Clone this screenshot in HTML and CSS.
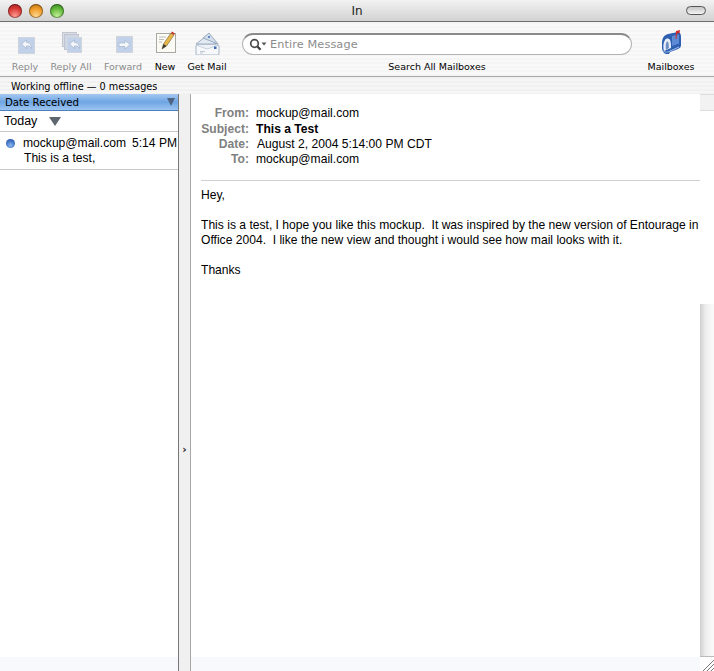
FILE: index.html
```html
<!DOCTYPE html>
<html lang="en">

<head>
  <meta charset="UTF-8">
  <meta name="viewport" content="width=device-width, initial-scale=1.0">
  <title>In</title>
  <link rel="stylesheet" href="styles.css">
</head>

<body>
  <div class="window">
    <div class="titlebar">
      <div class="lights">
        <span class="light red"></span>
        <span class="light amber"></span>
        <span class="light green"></span>
      </div>
      <div class="title">In</div>
      <div class="pill-wrap"><span class="pill"></span></div>
    </div>

    <div class="toolbar">
      <div class="tool tool-reply off">
        <svg width="20" height="20" viewBox="0 0 20 20">
          <rect x="3.500" y="3.500" width="16" height="16" fill="#b9cbe8" stroke="#c9ced6" />
          <path d="M6.500 10l5-4v2.500c3 0 5 2 5 6-1-2-3-3-5-2.500V14.500z" fill="#f4f7fb" stroke="#7f95b5" stroke-width=".5" />
        </svg>
        <span>Reply</span>
      </div>
      <div class="tool tool-all off">
        <svg width="24" height="24" viewBox="0 0 24 24">
          <rect x="3.500" y="2.500" width="14" height="14" fill="#d5dae4" stroke="#b8bcc6" />
          <rect x="5.500" y="4.500" width="14" height="15" fill="#c6d2e6" stroke="#b8bcc6" />
          <rect x="8.500" y="7.500" width="14" height="15" fill="#b9cbe8" stroke="#c9ced6" />
          <path d="M10.500 14l5-4v2.500c3 0 5 2 5 6-1-2-3-3-5-2.500v2.500z" fill="#f4f7fb" stroke="#7f95b5" stroke-width=".5" />
        </svg>
        <span>Reply All</span>
      </div>
      <div class="tool tool-forward off">
        <svg width="20" height="20" viewBox="0 0 20 20">
          <rect x="3.500" y="2.500" width="16" height="16" fill="#b9cbe8" stroke="#c9ced6" />
          <path d="M17 10.500l-5-4V9H6v3.500h6V15z" fill="#f4f7fb" stroke="#7f95b5" stroke-width=".5" />
        </svg>
        <span>Forward</span>
      </div>
      <div class="tool tool-new">
        <svg width="24" height="24" viewBox="0 0 24 24">
          <rect x="3.500" y="3.500" width="19" height="19" fill="#fbfaf4" stroke="#a9a9a4" />
          <path d="M6 7h7M6 9.500h5M6 12h3" stroke="#bdbdb8" />
          <path d="M9 19l1.500-5L18 3l3 2-7.500 11z" fill="#e8b84c" stroke="#6f5a2a" stroke-width=".6" />
          <path d="M18 3l1-1.500 3 2-1 1.500z" fill="#c23a2e" />
          <path d="M9 19l1.500-5 3 2z" fill="#3a3a3a" />
        </svg>
        <span>New</span>
      </div>
      <div class="tool tool-get">
        <svg width="26" height="24" viewBox="0 0 26 24">
          <path d="M2 13L13 4.500 22 13z" fill="#e3eaf3" stroke="#8a9cb2" stroke-width=".8" />
          <path d="M9 7l6-5 9 11z" fill="#d3deec" stroke="#8a9cb2" stroke-width=".8" />
          <circle cx="15" cy="6" r="1" fill="#3d6cb3" />
          <rect x="2" y="14" width="23" height="10" rx="1" fill="#f6f8fb" stroke="#8fa2ba" stroke-width=".8" />
          <path d="M2 14l11 4 12-4" fill="#eef2f7" stroke="#a9b8cc" stroke-width=".6" />
          <rect x="20" y="15.500" width="2.500" height="2.500" fill="#3d6cb3" />
          <path d="M6 20.500h5M6 22h3" stroke="#c3c8d0" />
        </svg>
        <span>Get Mail</span>
      </div>

      <div class="search">
        <div class="search-field">
          <svg class="search-icon" width="18" height="13" viewBox="0 0 18 13">
            <circle cx="5.500" cy="5.500" r="3.800" fill="none" stroke="#4a4a4a" stroke-width="1.700" />
            <path d="M8.500 8.500l3 3.300" stroke="#3a3a3a" stroke-width="2.200" />
            <path d="M12.500 4.500h5l-2.500 3z" fill="#555" />
          </svg>
          <span class="search-hint">Entire Message</span>
        </div>
        <span class="search-label">Search All Mailboxes</span>
      </div>

      <div class="tool tool-boxes">
        <svg width="24" height="24" viewBox="0 0 24 24">
          <path d="M3 13c0-5 2-8 6-9l10-2c2 0 3 2 3 5v8c0 2-1 3-3 4l-8 3-1 2c-4 1-7-2-7-6z" fill="#2f5fb0" />
          <path d="M5 21c-1-3-1-8 1-11 1-2 4-2 5 0 1 2 1 5 1 8z" fill="#e8eef8" />
          <path d="M7 20c-.500-3-.500-6 .500-8 .800-1 1.500-.500 2 .500l.500 5.500z" fill="#6f8fc4" />
          <path d="M13 6l7-1.500v9L13 16z" fill="#5d8bd6" />
          <path d="M3 20c2 2 5 3 8 1l9-4" stroke="#9dbdec" fill="none" />
          <path d="M16.500 9l.500-8 4-1-.500 3-2.500.700-.500 5.300z" fill="#cf2f2a" />
        </svg>
        <span>Mailboxes</span>
      </div>
    </div>

    <div class="status">Working offline — 0 messages</div>

    <div class="panes">
      <div class="list">
        <div class="list-head">
          <span>Date Received</span>
          <span class="head-arrow"></span>
        </div>
        <div class="group">
          <span>Today</span>
          <span class="group-arrow"></span>
        </div>
        <div class="msg">
          <div class="msg-top">
            <span class="dot"></span>
            <span class="msg-from">mockup@mail.com</span>
            <span class="msg-time">5:14 PM</span>
          </div>
          <div class="msg-subject">This is a test,</div>
        </div>
        <div class="list-fill"></div>
        <div class="strip"></div>
      </div>

      <div class="splitter"><span class="grip">›</span></div>

      <div class="reader">
        <div class="reader-main">
          <div class="mail">
            <div class="headers">
              <div class="hrow"><span class="hname">From:</span><span>mockup@mail.com</span></div>
              <div class="hrow"><span class="hname">Subject:</span><b>This a Test</b></div>
              <div class="hrow"><span class="hname">Date:</span><span class="hdate">August 2, 2004 5:14:00 PM CDT</span></div>
              <div class="hrow"><span class="hname">To:</span><span>mockup@mail.com</span></div>
            </div>
            <div class="body">
              <p>Hey,</p>
              <p>This is a test, I hope you like this mockup.&nbsp; It was inspired by the new version of Entourage in<br>Office 2004.&nbsp; I like the new view and thought i would see how mail looks with it.</p>
              <p>Thanks</p>
            </div>
          </div>
          <div class="scrollbar">
            <div class="scroll-top"></div>
            <div class="scroll-thumb"></div>
            <div class="scroll-track"></div>
          </div>
        </div>
        <div class="strip strip-end">
          <div class="resize">
            <svg width="14" height="14" viewBox="0 0 14 14">
              <path d="M3 14L14 3M7 14l7-7M11 14l3-3" stroke="#777" fill="none" />
            </svg>
          </div>
        </div>
      </div>
    </div>
  </div>
</body>

</html>
```

FILE: styles.css
```css
html,
body {
  margin: 0;
  padding: 0;
}

body {
  width: 714px;
  height: 671px;
  overflow: hidden;
  background-color: #fff;
  color: #000;
  font-family: "Liberation Sans", Arial, sans-serif;
}

.window {
  display: flex;
  flex-direction: column;
  height: 671px;
}

/* title bar */
.titlebar {
  display: flex;
  align-items: center;
  height: 21px;
  flex: none;
  background: linear-gradient(#f2f2f2, #d2d2d2);
  border-bottom: 1px solid #6f6f6f;
}

.lights {
  display: flex;
  gap: 7px;
  width: 200px;
  padding-left: 8px;
  box-sizing: border-box;
}

.light {
  width: 14px;
  height: 14px;
  border-radius: 50%;
  box-shadow: inset 0 0 0 1px rgba(0, 0, 0, .35);
}

.red {
  background: radial-gradient(circle at 50% 85%, #ff9c92, #d83a36 55%, #8f1a1c);
}

.amber {
  background: radial-gradient(circle at 50% 85%, #ffd890, #ee9a26 55%, #a4661a);
}

.green {
  background: radial-gradient(circle at 50% 85%, #c2f09a, #62b63a 55%, #2d7a1f);
}

.title {
  flex: 1;
  text-align: center;
  font-family: "DejaVu Sans", sans-serif;
  font-size: 12px;
  color: #222;
}

.pill-wrap {
  display: flex;
  justify-content: flex-end;
  width: 200px;
  padding-right: 8px;
  box-sizing: border-box;
}

.pill {
  width: 18px;
  height: 7px;
  border: 1px solid #555;
  border-radius: 5px;
  background: linear-gradient(#c4c4c4, #f4f4f4);
}

/* toolbar */
.toolbar {
  display: flex;
  height: 55px;
  flex: none;
  box-sizing: border-box;
  background: repeating-linear-gradient(#f5f5f5 0, #f5f5f5 2px, #f9f9f9 2px, #f9f9f9 4px);
  border-bottom: 1px solid #a6a6a6;
  font-family: "DejaVu Sans", sans-serif;
  font-size: 9.5px;
}

.tool {
  display: flex;
  flex-direction: column;
  align-items: center;
  justify-content: flex-end;
  padding-bottom: 4px;
  box-sizing: border-box;
  gap: 7px;
  white-space: nowrap;
}

.off {
  color: #8a8a8a;
}

.off svg {
  opacity: .85;
}

.tool-reply {
  width: 50px;
}

.tool-all {
  width: 42px;
}

.tool-forward {
  width: 62px;
}

.tool-new {
  width: 22px;
}

.tool-get {
  width: 62px;
}

.tool-get svg {
  margin-bottom: -1px;
}

.search {
  display: flex;
  flex-direction: column;
  align-items: center;
  width: 390px;
  margin-left: 4px;
  padding-top: 11px;
  box-sizing: border-box;
}

.search-field {
  display: flex;
  align-items: center;
  width: 390px;
  height: 22px;
  box-sizing: border-box;
  padding-left: 6px;
  gap: 3px;
  background: #fff;
  border: 1px solid #b4b4b4;
  border-top: 2px solid #8a8a8a;
  border-radius: 11px;
}

.search-hint {
  font-size: 11.3px;
  letter-spacing: .1px;
  color: #8c8c8c;
}

.search-label {
  margin-top: 6px;
}

.tool-boxes {
  width: 78px;
}

/* status line */
.status {
  height: 17px;
  flex: none;
  box-sizing: border-box;
  padding: 3px 0 0 11px;
  background: repeating-linear-gradient(#f1f1f1 0, #f1f1f1 2px, #f6f6f6 2px, #f6f6f6 4px);
  font-family: "DejaVu Sans", sans-serif;
  font-size: 9.7px;
  line-height: 13px;
}

/* panes */
.panes {
  display: flex;
  flex: 1;
  min-height: 0;
}

.list {
  display: flex;
  flex-direction: column;
  width: 178px;
  flex: none;
  border-right: 1px solid #777;
}

.list-fill {
  flex: 1;
}

.strip {
  height: 14px;
  flex: none;
  background: #f7f9fc;
}

.list-head {
  display: flex;
  align-items: center;
  justify-content: space-between;
  height: 16px;
  flex: none;
  padding: 0 3px 0 5px;
  background: linear-gradient(#a5c8f0, #6ea5e4 50%, #9cc4f0);
  border-bottom: 1px solid #4e80bf;
  font-family: "DejaVu Sans", sans-serif;
  font-size: 10.2px;
}

.head-arrow,
.group-arrow {
  width: 0;
  height: 0;
  border-left: 4px solid transparent;
  border-right: 4px solid transparent;
  border-top: 8px solid #4f6480;
}

.group {
  display: flex;
  align-items: center;
  gap: 12px;
  height: 20px;
  flex: none;
  padding-left: 4px;
  border-bottom: 1px solid #c8c8c8;
  font-size: 12.500px;
}

.group-arrow {
  border-left-width: 6px;
  border-right-width: 6px;
  border-top: 9px solid #5e6670;
}

.msg {
  height: 38px;
  flex: none;
  box-sizing: border-box;
  padding-top: 4px;
  border-bottom: 1px solid #c8c8c8;
  font-size: 12.100px;
  line-height: 15px;
}

.msg-top {
  display: flex;
  align-items: center;
  padding-left: 6px;
}

.dot {
  width: 9px;
  height: 9px;
  flex: none;
  border-radius: 50%;
  background: radial-gradient(circle at 50% 70%, #8db8f0, #2f62b8 70%, #24468a);
}

.msg-from {
  margin-left: 8px;
}

.msg-time {
  margin-left: 6px;
  white-space: nowrap;
}

.msg-subject {
  padding-left: 24px;
}

.splitter {
  display: flex;
  align-items: center;
  justify-content: center;
  width: 11px;
  flex: none;
  background: #f0f0f0;
  border-right: 1px solid #a8a8a8;
}

.grip {
  font-family: "DejaVu Sans", sans-serif;
  font-size: 11px;
  font-weight: bold;
  color: #222;
  margin-top: 134px;
}

.reader {
  display: flex;
  flex-direction: column;
  flex: 1;
  min-width: 0;
}

.reader-main {
  display: flex;
  flex: 1;
  min-height: 0;
}

.mail {
  flex: 1;
  min-width: 0;
  padding-top: 12px;
  font-size: 12.100px;
  white-space: nowrap;
}

.headers {
  height: 74px;
  margin-left: 10px;
  border-bottom: 1px solid #d0d0d0;
}

.hrow {
  display: flex;
  gap: 7px;
  height: 15px;
  line-height: 15px;
}

.hrow:first-child {
  margin-bottom: 1px;
}

.hname {
  width: 48px;
  text-align: right;
  font-weight: bold;
  color: #808080;
}

.hdate {
  margin-left: 1px;
}

.body {
  padding: 7px 0 0 10px;
  line-height: 15px;
}

.body p {
  margin: 0 0 15px;
}

.scrollbar {
  display: flex;
  flex-direction: column;
  width: 14px;
  flex: none;
}

.scroll-top {
  height: 17px;
  background: #f2f2f2;
  border-top: 1px solid #ddd;
  border-bottom: 1px solid #ddd;
  box-sizing: border-box;
}

.scroll-thumb {
  height: 193px;
  background: #fff;
}

.scroll-track {
  flex: 1;
  background: linear-gradient(90deg, #cfcfcf, #eeeeee 40%, #fbfbfb);
  border-bottom: 1px solid #bbb;
}

.strip-end {
  display: flex;
  justify-content: flex-end;
}

.resize {
  width: 14px;
  height: 14px;
  background: #fff;
}

.resize svg {
  display: block;
}
```
